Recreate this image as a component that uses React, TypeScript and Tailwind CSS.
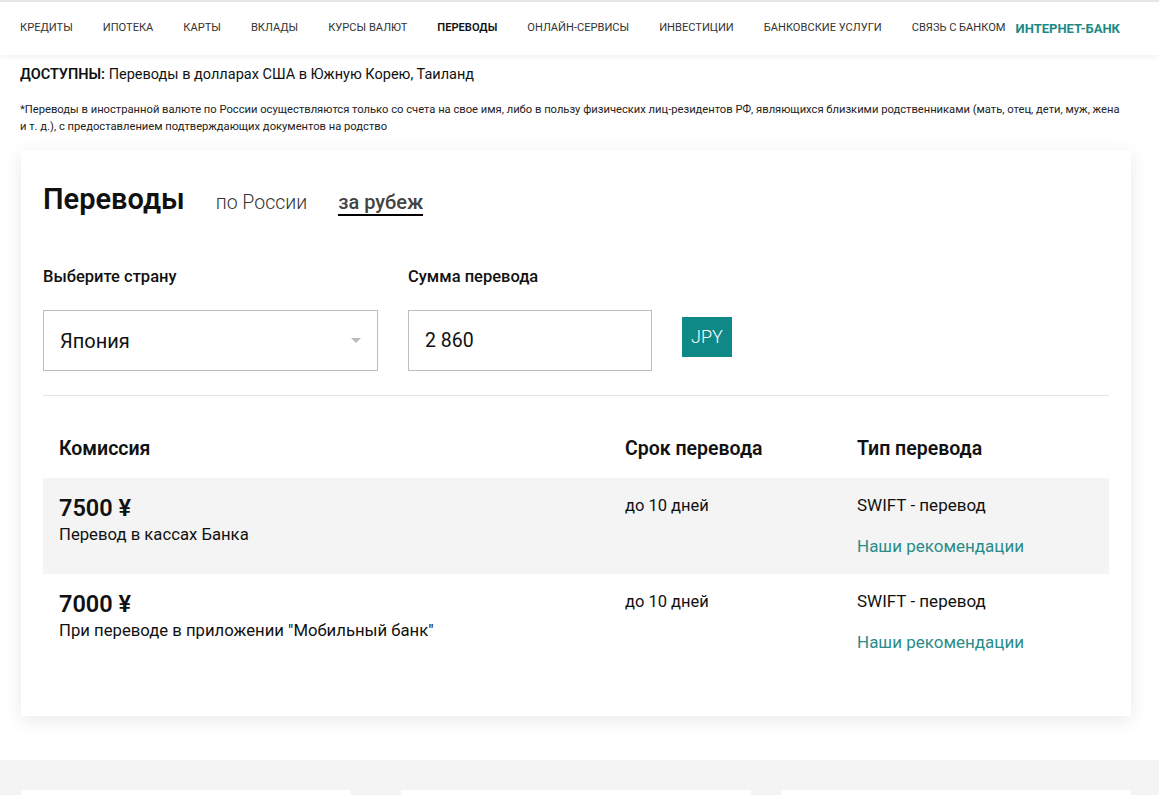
import React from "react";

const nav = [
  "КРЕДИТЫ",
  "ИПОТЕКА",
  "КАРТЫ",
  "ВКЛАДЫ",
  "КУРСЫ ВАЛЮТ",
  "ПЕРЕВОДЫ",
  "ОНЛАЙН-СЕРВИСЫ",
  "ИНВЕСТИЦИИ",
  "БАНКОВСКИЕ УСЛУГИ",
  "СВЯЗЬ С БАНКОМ",
];

const rows = [
  { sum: "7500 ¥", note: "Перевод в кассах Банка", shaded: true },
  { sum: "7000 ¥", note: 'При переводе в приложении "Мобильный банк"', shaded: false },
];

function App() {
  return (
    <div className="min-h-screen bg-white text-[#111] font-['Roboto',sans-serif]">
      {/* header */}
      <div className="border-t-2 border-[#e6e6e6] h-[55px] flex items-center pl-[20px] shadow-[0_2px_6px_rgba(0,0,0,0.06)] relative z-10 whitespace-nowrap">
        {nav.map((n) => (
          <span
            key={n}
            className={
              "shrink-0 text-[11.1px] mr-[30px] " +
              (n === "ПЕРЕВОДЫ" ? "font-semibold text-[#111]" : "text-[#333]")
            }
          >
            {n}
          </span>
        ))}
        <span className="shrink-0 text-[13px] font-bold text-[#1b8a86] -ml-[20px]">ИНТЕРНЕТ-БАНК</span>
      </div>

      <div className="pl-[20px] w-[1131px]">
        <p className="text-[14.5px] mt-[10px] leading-[20px]">
          <b className="font-semibold">ДОСТУПНЫ:</b> Переводы в долларах США в Южную Корею, Таиланд
        </p>
        <p className="text-[11.2px] leading-[17px] mt-[16px] text-[#222]">
          *Переводы в иностранной валюте по России осуществляются только со счета на свое имя, либо в пользу физических
          лиц-резидентов РФ, являющихся близкими родственниками (мать, отец, дети, муж, жена
          <br />и т. д.), с предоставлением подтверждающих документов на родство
        </p>

        {/* card */}
        <div className="mt-[15px] ml-[1px] w-[1110px] bg-white shadow-[0_4px_18px_rgba(0,0,0,0.09)] px-[22px] pt-[28px] pb-[46px]">
          <div className="flex items-baseline">
            <h1 className="text-[29px] font-semibold">Переводы</h1>
            <span className="ml-[31px] text-[19.5px] font-light text-[#333]">по России</span>
            <span className="ml-[31px] text-[20px] font-medium text-[#444] border-b-2 border-black leading-[23px]">
              за рубеж
            </span>
          </div>

          <div className="flex mt-[43px]">
            <div className="w-[335px]">
              <div className="text-[16.5px] font-medium">Выберите страну</div>
              <div className="mt-[21px] h-[61px] border border-[#bdbdbd] flex items-center justify-between pl-[16px] pr-[16px]">
                <span className="text-[20px]">Япония</span>
                <svg width="10" height="5" viewBox="0 0 10 5">
                  <path d="M0 0 L10 0 L5 5 Z" fill="#bbb" />
                </svg>
              </div>
            </div>
            <div className="ml-[30px] w-[244px]">
              <div className="text-[16.5px] font-medium">Сумма перевода</div>
              <div className="mt-[21px] h-[61px] border border-[#bdbdbd] flex items-center pl-[16px]">
                <span className="text-[19.5px]">2 860</span>
              </div>
            </div>
            <div className="ml-[30px] mt-[52px] w-[50px] h-[40px] bg-[#0e8985] text-white text-[18px] font-light flex items-center justify-center">
              JPY
            </div>
          </div>

          <div className="mt-[24px] border-t border-[#e4e4e4]" />

          <div className="grid grid-cols-[566px_232px_1fr] px-[16px] pt-[38px] pb-[14px] text-[19.5px] font-semibold">
            <span>Комиссия</span>
            <span>Срок перевода</span>
            <span>Тип перевода</span>
          </div>

          {rows.map((r) => (
            <div
              key={r.sum}
              className={"grid grid-cols-[566px_232px_1fr] px-[16px] pt-[15px] h-[96px] " + (r.shaded ? "bg-[#f4f4f4]" : "")}
            >
              <div>
                <div className="text-[23.5px] font-semibold leading-[30px]">{r.sum}</div>
                <div className="text-[16.7px] leading-[22px] mt-[1px]">{r.note}</div>
              </div>
              <div className="text-[16.5px] pt-[1px]">до 10 дней</div>
              <div className="text-[17px]">
                <div>SWIFT - перевод</div>
                <div className="mt-[16px] text-[17px] text-[#2a8c88]">Наши рекомендации</div>
              </div>
            </div>
          ))}
        </div>
      </div>

      {/* footer */}
      <div className="mt-[44px] bg-[#f4f4f4] pt-[30px] h-[300px] flex pl-[21px]">
        <div className="w-[329px] h-[200px] bg-white" />
        <div className="ml-[51px] w-[350px] h-[200px] bg-white" />
        <div className="ml-[30px] w-[350px] h-[200px] bg-white" />
      </div>
    </div>
  );
}

export default App;
